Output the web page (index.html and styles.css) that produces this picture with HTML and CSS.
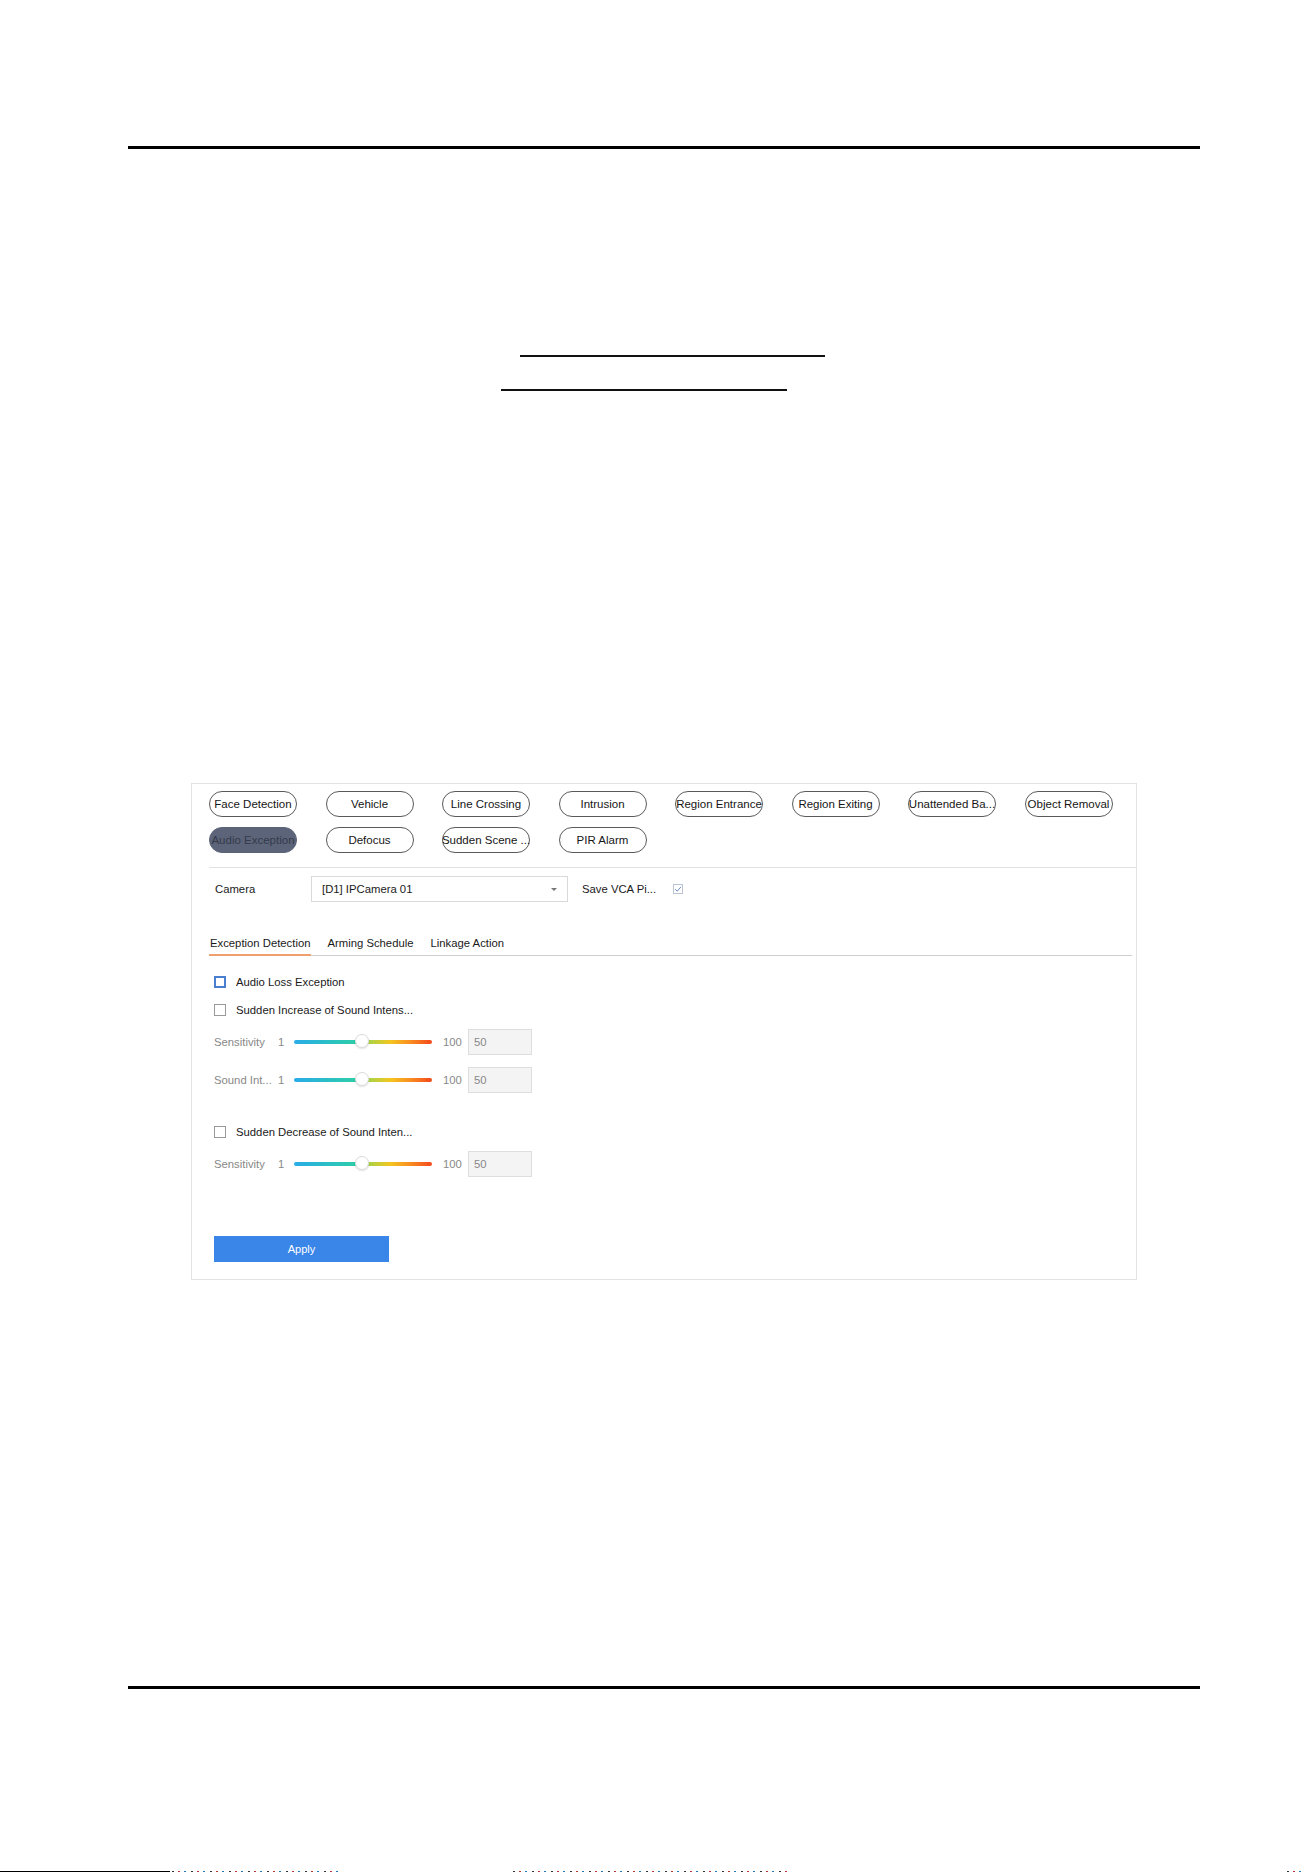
FILE: index.html
```html
<!DOCTYPE html>
<html lang="en">
<head>
    <meta charset="UTF-8">
    <title>Exception Detection</title>
    <link rel="stylesheet" href="styles.css">
</head>
<body>

<div class="rule"></div>

<div class="link-line first"></div>
<div class="link-line second"></div>

<section class="panel">
    <div class="event-grid">
        <div class="pill">Face Detection</div>
        <div class="pill">Vehicle</div>
        <div class="pill">Line Crossing</div>
        <div class="pill">Intrusion</div>
        <div class="pill">Region Entrance</div>
        <div class="pill">Region Exiting</div>
        <div class="pill">Unattended Ba...</div>
        <div class="pill">Object Removal</div>
        <div class="pill active">Audio Exception</div>
        <div class="pill">Defocus</div>
        <div class="pill">Sudden Scene ...</div>
        <div class="pill">PIR Alarm</div>
    </div>

    <div class="divider"></div>

    <div class="camera-row">
        <span class="field-label">Camera</span>
        <div class="select">
            <span>[D1] IPCamera 01</span>
            <span class="caret"></span>
        </div>
        <span class="save-label">Save VCA Pi...</span>
        <span class="tick">
            <svg width="10" height="10" viewBox="0 0 10 10"><path d="M2.2 5.2 L4.2 7.2 L8 2.8" fill="none" stroke="#6f8fc4" stroke-width="1"/></svg>
        </span>
    </div>

    <div class="tabs">
        <div class="tab active">Exception Detection</div>
        <div class="tab">Arming Schedule</div>
        <div class="tab">Linkage Action</div>
    </div>

    <div class="form">
        <div class="check-row first">
            <span class="box focus"></span>
            <span>Audio Loss Exception</span>
        </div>
        <div class="check-row">
            <span class="box"></span>
            <span>Sudden Increase of Sound Intens...</span>
        </div>
        <div class="slider-row">
            <span class="slider-label">Sensitivity</span>
            <span class="min">1</span>
            <div class="track"><span class="knob"></span></div>
            <span class="max">100</span>
            <div class="value">50</div>
        </div>
        <div class="slider-row second">
            <span class="slider-label">Sound Int...</span>
            <span class="min">1</span>
            <div class="track"><span class="knob"></span></div>
            <span class="max">100</span>
            <div class="value">50</div>
        </div>
        <div class="check-row spaced">
            <span class="box"></span>
            <span>Sudden Decrease of Sound Inten...</span>
        </div>
        <div class="slider-row">
            <span class="slider-label">Sensitivity</span>
            <span class="min">1</span>
            <div class="track"><span class="knob"></span></div>
            <span class="max">100</span>
            <div class="value">50</div>
        </div>

        <button class="apply">Apply</button>
    </div>
</section>

<div class="rule bottom"></div>

<div class="strip">
    <span class="strip-black"></span>
    <span class="strip-dots one"></span>
    <span class="strip-dots two"></span>
    <span class="strip-dots three"></span>
</div>

</body>
</html>
```

FILE: styles.css
```css
body {
    font-family: 'Liberation Sans', Arial, sans-serif;
    background-color: #fff;
    margin: 0;
    padding: 0;
    color: #1a1a1a;
    width: 1313px;
    height: 1873px;
    overflow: hidden;
}

.rule {
    margin: 146px 0 0 128px;
    width: 1072px;
    height: 3px;
    background-color: #000;
}

.rule.bottom {
    margin-top: 406px;
}

.link-line {
    height: 2px;
    background-color: #111;
}

.link-line.first {
    margin: 206px 0 0 520px;
    width: 305px;
}

.link-line.second {
    margin: 32px 0 0 501px;
    width: 286px;
}

/* settings panel */
.panel {
    margin: 392px 0 0 191px;
    width: 946px;
    box-sizing: border-box;
    border: 1px solid #e3e3e3;
    padding: 7px 0 17px 17px;
    font-size: 11.3px;
}

.event-grid {
    display: grid;
    grid-template-columns: repeat(8, 88px);
    grid-auto-rows: 26px;
    column-gap: 28.5px;
    row-gap: 10px;
}

.pill {
    display: flex;
    align-items: center;
    justify-content: center;
    box-sizing: border-box;
    border: 1px solid #5a5a5a;
    border-radius: 13px;
    font-size: 11.5px;
    white-space: nowrap;
    color: #161616;
}

.pill.active {
    background-color: #5c6479;
    border-color: #5c6479;
    color: #343a4a;
}

.divider {
    margin-top: 14px;
    height: 1px;
    background-color: #e2e2e2;
}

.camera-row {
    margin-top: 8px;
    height: 26px;
    display: flex;
    align-items: center;
    padding-left: 6px;
}

.field-label {
    width: 96px;
}

.select {
    width: 257px;
    height: 26px;
    box-sizing: border-box;
    border: 1px solid #d9d9d9;
    display: flex;
    align-items: center;
    justify-content: space-between;
    padding: 0 10px 0 10px;
}

.caret {
    width: 0;
    height: 0;
    border-left: 3px solid transparent;
    border-right: 3px solid transparent;
    border-top: 3px solid #777;
}

.save-label {
    margin-left: 14px;
    width: 91px;
}

.tick {
    width: 10px;
    height: 10px;
    box-sizing: border-box;
    border: 1px solid #b9c4d6;
    display: flex;
}

.tick svg {
    margin: -1px;
}

.tabs {
    margin: 30px 4px 0 0;
    display: flex;
    gap: 15px;
    border-bottom: 1px solid #cfcfcf;
}

.tab {
    line-height: 23px;
    padding: 0 1px;
}

.tab.active {
    border-bottom: 2px solid #f0a070;
    margin-bottom: -1px;
    line-height: 22px;
}

.form {
    padding-left: 5px;
}

.check-row {
    margin-top: 8px;
    height: 20px;
    display: flex;
    align-items: center;
}

.check-row.first {
    margin-top: 16px;
}

.check-row.spaced {
    margin-top: 29px;
}

.box {
    width: 12px;
    height: 12px;
    box-sizing: border-box;
    border: 1px solid #9a9a9a;
    margin-right: 10px;
}

.box.focus {
    border: 2px solid #4a7fd0;
}

.slider-row {
    margin-top: 9px;
    height: 26px;
    display: flex;
    align-items: center;
    color: #888;
}

.slider-row.second {
    margin-top: 12px;
}

.slider-label {
    width: 64px;
    white-space: nowrap;
}

.min {
    width: 16px;
}

.track {
    position: relative;
    width: 138px;
    height: 4px;
    border-radius: 2px;
    background: linear-gradient(90deg, #29ace8 0%, #2dcfa6 47%, #a3d44a 53%, #f4c520 70%, #f98a20 85%, #f4481c 100%);
}

.knob {
    position: absolute;
    left: 61px;
    top: -6px;
    width: 14px;
    height: 14px;
    box-sizing: border-box;
    border-radius: 50%;
    background-color: #fff;
    border: 1px solid #dcdcdc;
    box-shadow: 0 1px 2px rgba(0, 0, 0, 0.12);
}

.max {
    margin-left: 11px;
    width: 25px;
}

.value {
    width: 64px;
    height: 26px;
    box-sizing: border-box;
    border: 1px solid #dedede;
    background-color: #f4f4f4;
    display: flex;
    align-items: center;
    padding-left: 5px;
}

.apply {
    margin-top: 59px;
    width: 175px;
    height: 26px;
    border: none;
    background-color: #3a85e8;
    color: white;
    font-family: inherit;
    font-size: 11px;
    display: block;
    padding: 0;
}

/* thin scan strip along the bottom edge */
.strip {
    margin-top: 182px;
    height: 1px;
    display: flex;
}

.strip-black {
    width: 170px;
    background-color: #000;
}

.strip-dots {
    background: repeating-linear-gradient(90deg, #333 0 2px, transparent 2px 6px, #b33 6px 8px, transparent 8px 12px, #27b 12px 14px, transparent 14px 19px);
}

.strip-dots.one {
    margin-left: 2px;
    width: 171px;
}

.strip-dots.two {
    margin-left: 170px;
    width: 274px;
}

.strip-dots.three {
    margin-left: 500px;
    width: 19px;
}
```
